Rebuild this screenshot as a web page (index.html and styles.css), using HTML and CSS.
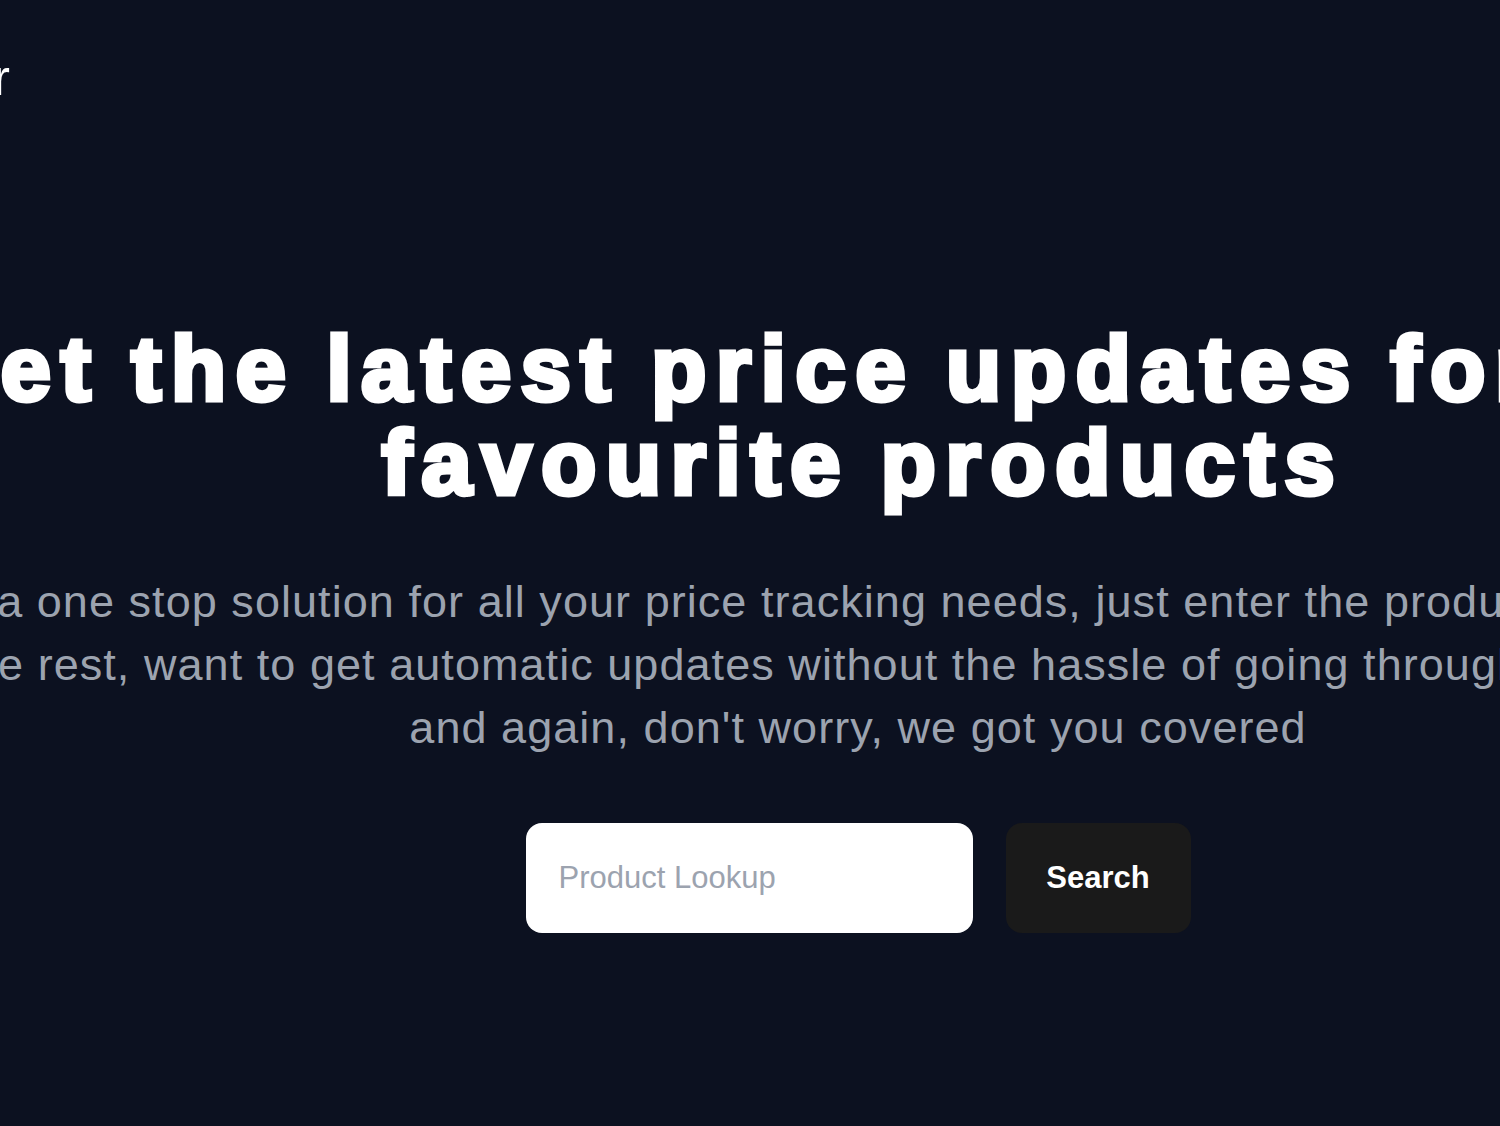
FILE: index.html
```html
<!DOCTYPE html>
<html lang="en">
<head>
<meta charset="utf-8">
<title>Pricer</title>
<link rel="stylesheet" href="styles.css">
</head>
<body>
<div class="page">
  <nav class="nav">
    <div class="brand"><span class="brand-text">Pricer</span></div>
  </nav>
  <main class="hero">
    <h1 class="title">Get the latest price updates for your favourite products</h1>
    <p class="lead">
      <span class="line">Pricer is a one stop solution for all your price tracking needs, just enter the product link or name and</span><br>
      <span class="line">we'll do the rest, want to get automatic updates without the hassle of going through the websites again</span><br>
      <span class="line">and again, don't worry, we got you covered</span>
    </p>
    <form class="search" onsubmit="return false">
      <input class="search-input" type="text" placeholder="Product Lookup">
      <button class="search-btn" type="submit">Search</button>
    </form>
  </main>
</div>
</body>
</html>
```
FILE: styles.css
```css
html, body {
  margin: 0;
  padding: 0;
  overflow: hidden;
  background: #0c1120;
}
body {
  font-family: "Liberation Sans", Arial, sans-serif;
  min-height: 1126px;
}
.page {
  width: 2116px;
  margin-left: -200px;
}
.nav {
  display: flex;
  padding-top: 50px;
  height: 80px;
}
.brand {
  width: 210px;
  display: flex;
  justify-content: flex-end;
  white-space: nowrap;
}
.brand-text {
  color: #ffffff;
  font-size: 50px;
  line-height: 1.15;
  font-weight: 400;
}
.hero {
  display: flex;
  flex-direction: column;
  align-items: center;
  padding-top: 191.5px;
}
.title {
  margin: 0 auto;
  max-width: 1950px;
  padding-left: 10px;
  color: #ffffff;
  font-size: 90px;
  line-height: 94.7px;
  font-weight: 700;
  letter-spacing: 9.8px;
  word-spacing: -4px;
  -webkit-text-stroke: 5px #ffffff;
  text-align: center;
}
.lead {
  margin: 59.5px 0 0;
  color: #9ca3af;
  font-size: 45px;
  line-height: 63px;
  letter-spacing: 1.05px;
  text-align: center;
  white-space: nowrap;
}
.search {
  display: flex;
  gap: 33px;
  margin-top: 64px;
}
.search-input {
  box-sizing: border-box;
  width: 447px;
  height: 110px;
  padding: 0 33px;
  border: none;
  border-radius: 16px;
  background: #ffffff;
  font-family: "Liberation Sans", Arial, sans-serif;
  font-size: 31px;
  color: #111827;
  outline: none;
}
.search-input::placeholder {
  color: #9ca3af;
}
.search-btn {
  box-sizing: border-box;
  width: 185px;
  height: 110px;
  border: none;
  border-radius: 16px;
  background: #1a1a1a;
  color: #ffffff;
  font-family: "Liberation Sans", Arial, sans-serif;
  font-size: 31px;
  font-weight: 700;
  cursor: pointer;
}
```
